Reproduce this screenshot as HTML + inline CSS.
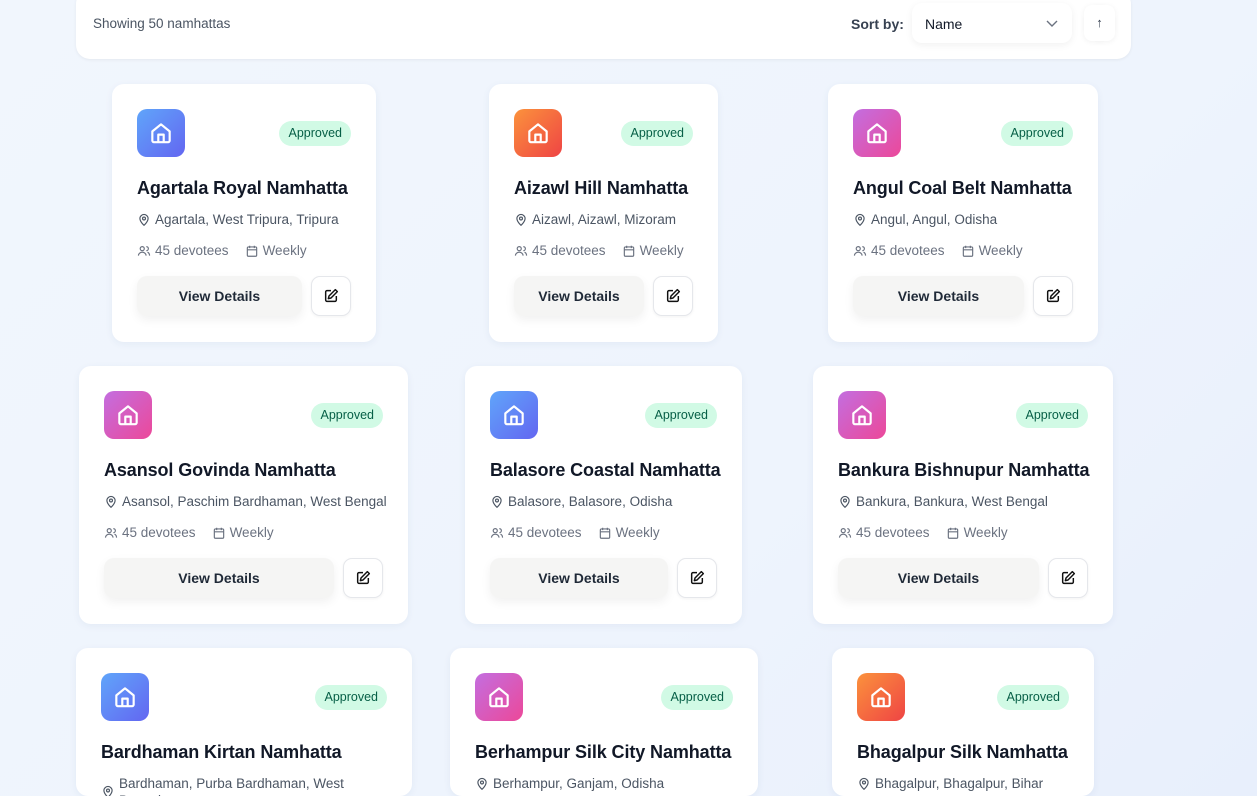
<!DOCTYPE html>
<html><head><meta charset="utf-8"><style>
*{box-sizing:border-box;margin:0;padding:0}
html,body{width:1257px;height:796px;overflow:hidden}
body{font-family:"Liberation Sans",sans-serif;background:linear-gradient(135deg,#f1f6fd 0%,#eef4fd 60%,#e8effc 100%);position:relative}
.top{position:absolute;left:76px;top:-10px;width:1055px;height:69px;background:#fff;border-radius:14px;box-shadow:0 1px 3px rgba(0,0,0,.06)}
.top .show{position:absolute;left:17px;top:26px;font-size:13.5px;color:#4b5563}
.top .sb{position:absolute;left:775px;top:26px;font-size:14px;font-weight:bold;color:#374151}
.sel{position:absolute;left:836px;top:13px;width:160px;height:40px;background:#fff;border-radius:10px;box-shadow:0 2px 8px rgba(0,0,0,.06);font-size:14px;color:#111827;padding:13px 13px}
.sel svg{position:absolute;right:14px;top:17px}
.up{position:absolute;left:1008px;top:15px;width:31px;height:36px;background:#fff;border-radius:8px;box-shadow:0 1px 6px rgba(0,0,0,.06);font-size:13px;text-align:center;line-height:36px;color:#374151}
.card{position:absolute;height:258px;background:#fff;border-radius:12px;box-shadow:0 2px 8px rgba(30,60,120,.06);padding:25px 25px 0 25px}
.card.s{height:148px}
.ic{width:48px;height:48px;border-radius:10px;display:flex;align-items:center;justify-content:center}
.b{background:linear-gradient(135deg,#60a5fa,#6366f1)}
.o{background:linear-gradient(135deg,#fb923c,#ef4444)}
.p{background:linear-gradient(135deg,#c36ee0,#ec4899)}
.badge{position:absolute;right:25px;top:37px;height:25px;padding:0 9px;border-radius:13px;background:#d1fae5;color:#065f46;font-size:12.5px;line-height:25px}
h3{font-size:18px;font-weight:bold;color:#111827;margin-top:20px;line-height:22px;white-space:nowrap;letter-spacing:-0.1px}
.loc{display:flex;align-items:center;gap:4px;margin-top:12px;font-size:13.5px;color:#4b5563;line-height:17px;white-space:nowrap}
.loc svg,.meta svg{flex:none}
.meta{display:flex;align-items:center;margin-top:15px;font-size:13.5px;color:#6b7280;white-space:nowrap}
.meta span{display:flex;align-items:center;gap:4px;margin-right:16px}
.btns{display:flex;gap:9px;margin-top:18px}
.vd{flex:1;height:40px;border-radius:10px;background:#f5f5f4;box-shadow:0 4px 10px rgba(0,0,0,.06);font-size:14px;font-weight:bold;color:#1f2937;text-align:center;line-height:40px}
.ed{flex:none;width:40px;height:40px;border-radius:9px;border:1px solid #e5e7eb;background:#fff;display:flex;align-items:center;justify-content:center;box-shadow:0 1px 3px rgba(0,0,0,.05)}
</style></head><body>
<div class="top"><div class="show">Showing 50 namhattas</div><div class="sb">Sort by:</div>
<div class="sel">Name<svg width="12" height="8" viewBox="0 0 12 8"><path d="M1 1l5 5 5-5" fill="none" stroke="#6b7280" stroke-width="1.4"/></svg></div>
<div class="up">↑</div></div>

<svg width="0" height="0" style="position:absolute"><defs>
<symbol id="h" viewBox="0 0 24 24"><path d="M4 10.5L12 4l8 6.5V19a1.5 1.5 0 0 1-1.5 1.5h-13A1.5 1.5 0 0 1 4 19z M9.5 20.5v-7h5v7" fill="none" stroke="#fff" stroke-width="2" stroke-linejoin="round"/></symbol>
<symbol id="pin" viewBox="0 0 24 24"><path d="M12 21s-7-6-7-11.5a7 7 0 0 1 14 0C19 15 12 21 12 21z" fill="none" stroke="#4b5563" stroke-width="2"/><circle cx="12" cy="9.5" r="2.5" fill="none" stroke="#4b5563" stroke-width="2"/></symbol>
<symbol id="ppl" viewBox="0 0 24 24"><circle cx="9" cy="8" r="3.5" fill="none" stroke="#6b7280" stroke-width="2"/><path d="M2.5 20c0-3.5 3-6 6.5-6s6.5 2.5 6.5 6M16 4.5a3.5 3.5 0 0 1 0 7M18 14c2 .7 3.5 3 3.5 6" fill="none" stroke="#6b7280" stroke-width="2"/></symbol>
<symbol id="cal" viewBox="0 0 24 24"><rect x="4" y="5" width="16" height="16" rx="2" fill="none" stroke="#6b7280" stroke-width="2"/><path d="M4 10h16M8 3v4M16 3v4" stroke="#6b7280" stroke-width="2"/></symbol>
<symbol id="ed" viewBox="0 0 24 24"><path d="M12 4H6a2 2 0 0 0-2 2v12a2 2 0 0 0 2 2h12a2 2 0 0 0 2-2v-6" fill="none" stroke="#111" stroke-width="2.2"/><path d="M18.5 2.5l3 3L12 15l-4 1 1-4z" fill="none" stroke="#111" stroke-width="2.2" stroke-linejoin="round"/></symbol>
</defs></svg>

<div class="card" style="left:112px;top:84px;width:264px"><div class="ic b"><svg width="26" height="26"><use href="#h"/></svg></div><div class="badge">Approved</div><h3>Agartala Royal Namhatta</h3><div class="loc"><svg width="14" height="14"><use href="#pin"/></svg>Agartala, West Tripura, Tripura</div><div class="meta"><span><svg width="14" height="14"><use href="#ppl"/></svg>45 devotees</span><span><svg width="14" height="14"><use href="#cal"/></svg>Weekly</span></div><div class="btns"><div class="vd">View Details</div><div class="ed"><svg width="16" height="16"><use href="#ed"/></svg></div></div></div>

<div class="card" style="left:489px;top:84px;width:229px"><div class="ic o"><svg width="26" height="26"><use href="#h"/></svg></div><div class="badge">Approved</div><h3>Aizawl Hill Namhatta</h3><div class="loc"><svg width="14" height="14"><use href="#pin"/></svg>Aizawl, Aizawl, Mizoram</div><div class="meta"><span><svg width="14" height="14"><use href="#ppl"/></svg>45 devotees</span><span><svg width="14" height="14"><use href="#cal"/></svg>Weekly</span></div><div class="btns"><div class="vd">View Details</div><div class="ed"><svg width="16" height="16"><use href="#ed"/></svg></div></div></div>

<div class="card" style="left:828px;top:84px;width:270px"><div class="ic p"><svg width="26" height="26"><use href="#h"/></svg></div><div class="badge">Approved</div><h3>Angul Coal Belt Namhatta</h3><div class="loc"><svg width="14" height="14"><use href="#pin"/></svg>Angul, Angul, Odisha</div><div class="meta"><span><svg width="14" height="14"><use href="#ppl"/></svg>45 devotees</span><span><svg width="14" height="14"><use href="#cal"/></svg>Weekly</span></div><div class="btns"><div class="vd">View Details</div><div class="ed"><svg width="16" height="16"><use href="#ed"/></svg></div></div></div>

<div class="card" style="left:79px;top:366px;width:329px"><div class="ic p"><svg width="26" height="26"><use href="#h"/></svg></div><div class="badge">Approved</div><h3>Asansol Govinda Namhatta</h3><div class="loc"><svg width="14" height="14"><use href="#pin"/></svg>Asansol, Paschim Bardhaman, West Bengal</div><div class="meta"><span><svg width="14" height="14"><use href="#ppl"/></svg>45 devotees</span><span><svg width="14" height="14"><use href="#cal"/></svg>Weekly</span></div><div class="btns"><div class="vd">View Details</div><div class="ed"><svg width="16" height="16"><use href="#ed"/></svg></div></div></div>

<div class="card" style="left:465px;top:366px;width:277px"><div class="ic b"><svg width="26" height="26"><use href="#h"/></svg></div><div class="badge">Approved</div><h3>Balasore Coastal Namhatta</h3><div class="loc"><svg width="14" height="14"><use href="#pin"/></svg>Balasore, Balasore, Odisha</div><div class="meta"><span><svg width="14" height="14"><use href="#ppl"/></svg>45 devotees</span><span><svg width="14" height="14"><use href="#cal"/></svg>Weekly</span></div><div class="btns"><div class="vd">View Details</div><div class="ed"><svg width="16" height="16"><use href="#ed"/></svg></div></div></div>

<div class="card" style="left:813px;top:366px;width:300px"><div class="ic p"><svg width="26" height="26"><use href="#h"/></svg></div><div class="badge">Approved</div><h3>Bankura Bishnupur Namhatta</h3><div class="loc"><svg width="14" height="14"><use href="#pin"/></svg>Bankura, Bankura, West Bengal</div><div class="meta"><span><svg width="14" height="14"><use href="#ppl"/></svg>45 devotees</span><span><svg width="14" height="14"><use href="#cal"/></svg>Weekly</span></div><div class="btns"><div class="vd">View Details</div><div class="ed"><svg width="16" height="16"><use href="#ed"/></svg></div></div></div>

<div class="card s" style="left:76px;top:648px;width:336px"><div class="ic b"><svg width="26" height="26"><use href="#h"/></svg></div><div class="badge">Approved</div><h3>Bardhaman Kirtan Namhatta</h3><div class="loc" style="align-items:flex-start;margin-top:12px"><svg width="14" height="14" style="margin-top:10px"><use href="#pin"/></svg><span>Bardhaman, Purba Bardhaman, West<br>Bengal</span></div></div>

<div class="card s" style="left:450px;top:648px;width:308px"><div class="ic p"><svg width="26" height="26"><use href="#h"/></svg></div><div class="badge">Approved</div><h3>Berhampur Silk City Namhatta</h3><div class="loc"><svg width="14" height="14"><use href="#pin"/></svg>Berhampur, Ganjam, Odisha</div></div>

<div class="card s" style="left:832px;top:648px;width:262px"><div class="ic o"><svg width="26" height="26"><use href="#h"/></svg></div><div class="badge">Approved</div><h3>Bhagalpur Silk Namhatta</h3><div class="loc"><svg width="14" height="14"><use href="#pin"/></svg>Bhagalpur, Bhagalpur, Bihar</div></div>
</body></html>
